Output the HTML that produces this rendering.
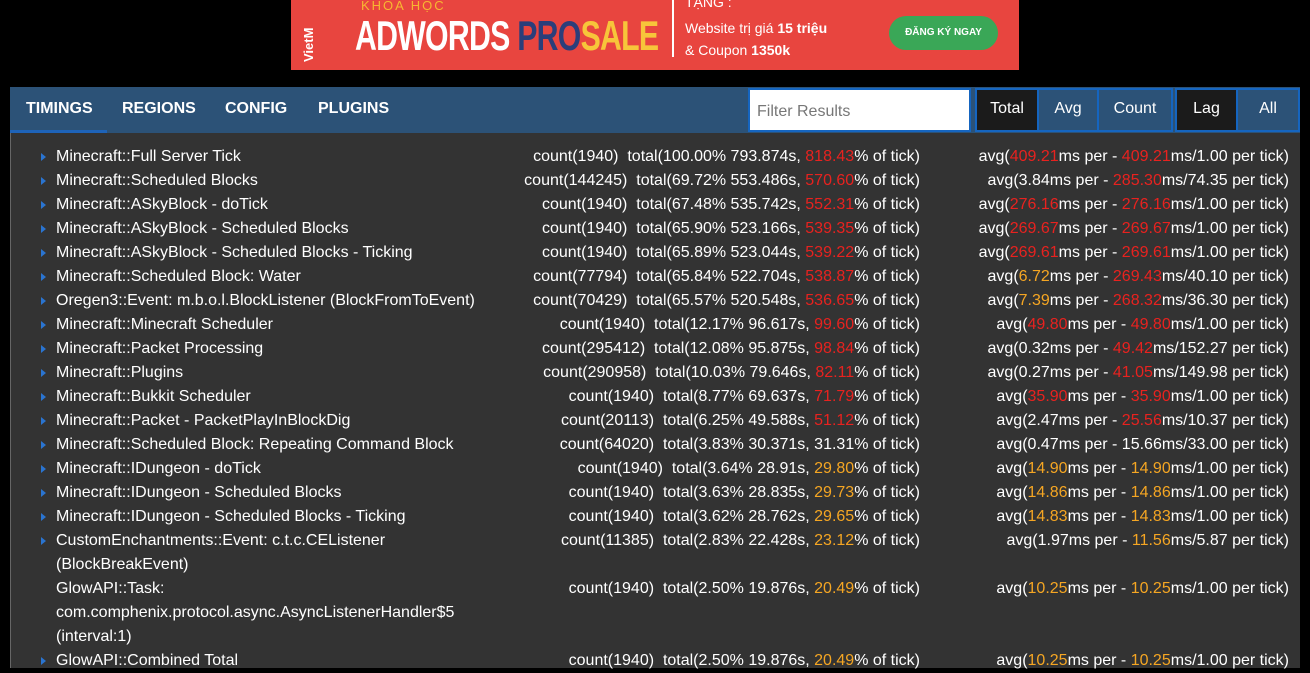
<!DOCTYPE html>
<html><head><meta charset="utf-8"><style>
*{margin:0;padding:0;box-sizing:border-box}
body{width:1310px;height:668px;background:#000;overflow:hidden;font-family:"Liberation Sans",Arial,sans-serif;position:relative}
.banner{position:absolute;left:291px;top:0;width:728px;height:70px;background:#e8453f;overflow:hidden;color:#fff}
.nav{position:absolute;left:10px;top:87px;width:1290px;height:46px;background:#2c5277}
.tab{position:absolute;top:13px;font-weight:bold;font-size:16px;color:#fff}
.uline{position:absolute;left:0;top:43px;width:97px;height:3px;background:#1e63b8}
.filter{position:absolute;left:738px;top:1px;width:223px;height:44px;background:#fff;border:2px solid #1565c0;color:#777;font-size:16px;padding:13px 7px}
.btns{position:absolute;top:1px;height:44px;border:2px solid #1565c0;display:flex;background:#2c5277}
.btns div{color:#fff;font-size:16px;text-align:center;line-height:38px;border-right:2px solid #1565c0}
.btns div:last-child{border-right:none}
.btns .on{background:#1b1b1b}
.panel{position:absolute;left:10px;top:133px;width:1290px;height:535px;background:#333;border-left:1px solid #666}
.row{position:absolute;left:0;width:1290px;color:#fff;font-size:16px;line-height:24px}
.tri{position:absolute;left:30px;top:8px;width:0;height:0;border-left:5px solid #2a74d0;border-top:4.5px solid transparent;border-bottom:4.5px solid transparent}
.nm{position:absolute;left:45px;top:0;width:440px}
.ct{position:absolute;right:381px;top:0;white-space:pre}
.av{position:absolute;right:12px;top:0;white-space:pre}
.r{color:#e8221f}.o{color:#f5a623}
</style></head><body>
<div class="banner">
<div style="position:absolute;left:10px;top:6px;font-size:13px;font-weight:bold;transform:rotate(-90deg);transform-origin:0 0;top:62px">VietM</div>
<div style="position:absolute;left:70px;top:-2px;font-size:13px;color:#f7b731;letter-spacing:2px">KHOA HỌC</div>
<div style="position:absolute;left:64px;top:12px;font-size:42px;font-weight:bold;transform:scaleX(.72);transform-origin:0 0;letter-spacing:-1px">ADWORDS <span style="color:#2b3e7a">PRO</span><span style="color:#f7c53a">SALE</span></div>
<div style="position:absolute;left:381px;top:0;width:2px;height:57px;background:#fff"></div>
<div style="position:absolute;left:394px;top:-6px;font-size:14px">TẶNG :</div>
<div style="position:absolute;left:394px;top:20px;font-size:14px">Website trị giá <b>15 triệu</b></div>
<div style="position:absolute;left:394px;top:42px;font-size:14px">&amp; Coupon <b>1350k</b></div>
<div style="position:absolute;left:598px;top:16px;width:109px;height:34px;border-radius:17px;background:#3aa757;font-size:10px;font-weight:bold;text-align:center;line-height:34px">ĐĂNG KÝ NGAY</div>
</div>
<div class="nav">
<div class="tab" style="left:16px">TIMINGS</div>
<div class="tab" style="left:112px">REGIONS</div>
<div class="tab" style="left:215px">CONFIG</div>
<div class="tab" style="left:308px">PLUGINS</div>
<div class="uline"></div>
<div class="filter">Filter Results</div>
<div class="btns" style="left:965px;width:198px"><div class="on" style="width:62px">Total</div><div style="width:60px">Avg</div><div style="width:72px">Count</div></div>
<div class="btns" style="left:1165px;width:125px"><div class="on" style="width:61px">Lag</div><div style="width:60px">All</div></div>
</div>
<div class="panel">
<div class="row" style="top:12px"><i class="tri"></i><div class="nm">Minecraft::Full Server Tick</div><div class="ct">count(1940)  total(100.00% 793.874s, <span class="r">818.43</span>% of tick)</div><div class="av">avg(<span class="r">409.21</span>ms per - <span class="r">409.21</span>ms/1.00 per tick)</div></div>
<div class="row" style="top:36px"><i class="tri"></i><div class="nm">Minecraft::Scheduled Blocks</div><div class="ct">count(144245)  total(69.72% 553.486s, <span class="r">570.60</span>% of tick)</div><div class="av">avg(3.84ms per - <span class="r">285.30</span>ms/74.35 per tick)</div></div>
<div class="row" style="top:60px"><i class="tri"></i><div class="nm">Minecraft::ASkyBlock - doTick</div><div class="ct">count(1940)  total(67.48% 535.742s, <span class="r">552.31</span>% of tick)</div><div class="av">avg(<span class="r">276.16</span>ms per - <span class="r">276.16</span>ms/1.00 per tick)</div></div>
<div class="row" style="top:84px"><i class="tri"></i><div class="nm">Minecraft::ASkyBlock - Scheduled Blocks</div><div class="ct">count(1940)  total(65.90% 523.166s, <span class="r">539.35</span>% of tick)</div><div class="av">avg(<span class="r">269.67</span>ms per - <span class="r">269.67</span>ms/1.00 per tick)</div></div>
<div class="row" style="top:108px"><i class="tri"></i><div class="nm">Minecraft::ASkyBlock - Scheduled Blocks - Ticking</div><div class="ct">count(1940)  total(65.89% 523.044s, <span class="r">539.22</span>% of tick)</div><div class="av">avg(<span class="r">269.61</span>ms per - <span class="r">269.61</span>ms/1.00 per tick)</div></div>
<div class="row" style="top:132px"><i class="tri"></i><div class="nm">Minecraft::Scheduled Block: Water</div><div class="ct">count(77794)  total(65.84% 522.704s, <span class="r">538.87</span>% of tick)</div><div class="av">avg(<span class="o">6.72</span>ms per - <span class="r">269.43</span>ms/40.10 per tick)</div></div>
<div class="row" style="top:156px"><i class="tri"></i><div class="nm">Oregen3::Event: m.b.o.l.BlockListener (BlockFromToEvent)</div><div class="ct">count(70429)  total(65.57% 520.548s, <span class="r">536.65</span>% of tick)</div><div class="av">avg(<span class="o">7.39</span>ms per - <span class="r">268.32</span>ms/36.30 per tick)</div></div>
<div class="row" style="top:180px"><i class="tri"></i><div class="nm">Minecraft::Minecraft Scheduler</div><div class="ct">count(1940)  total(12.17% 96.617s, <span class="r">99.60</span>% of tick)</div><div class="av">avg(<span class="r">49.80</span>ms per - <span class="r">49.80</span>ms/1.00 per tick)</div></div>
<div class="row" style="top:204px"><i class="tri"></i><div class="nm">Minecraft::Packet Processing</div><div class="ct">count(295412)  total(12.08% 95.875s, <span class="r">98.84</span>% of tick)</div><div class="av">avg(0.32ms per - <span class="r">49.42</span>ms/152.27 per tick)</div></div>
<div class="row" style="top:228px"><i class="tri"></i><div class="nm">Minecraft::Plugins</div><div class="ct">count(290958)  total(10.03% 79.646s, <span class="r">82.11</span>% of tick)</div><div class="av">avg(0.27ms per - <span class="r">41.05</span>ms/149.98 per tick)</div></div>
<div class="row" style="top:252px"><i class="tri"></i><div class="nm">Minecraft::Bukkit Scheduler</div><div class="ct">count(1940)  total(8.77% 69.637s, <span class="r">71.79</span>% of tick)</div><div class="av">avg(<span class="r">35.90</span>ms per - <span class="r">35.90</span>ms/1.00 per tick)</div></div>
<div class="row" style="top:276px"><i class="tri"></i><div class="nm">Minecraft::Packet - PacketPlayInBlockDig</div><div class="ct">count(20113)  total(6.25% 49.588s, <span class="r">51.12</span>% of tick)</div><div class="av">avg(2.47ms per - <span class="r">25.56</span>ms/10.37 per tick)</div></div>
<div class="row" style="top:300px"><i class="tri"></i><div class="nm">Minecraft::Scheduled Block: Repeating Command Block</div><div class="ct">count(64020)  total(3.83% 30.371s, 31.31% of tick)</div><div class="av">avg(0.47ms per - 15.66ms/33.00 per tick)</div></div>
<div class="row" style="top:324px"><i class="tri"></i><div class="nm">Minecraft::IDungeon - doTick</div><div class="ct">count(1940)  total(3.64% 28.91s, <span class="o">29.80</span>% of tick)</div><div class="av">avg(<span class="o">14.90</span>ms per - <span class="o">14.90</span>ms/1.00 per tick)</div></div>
<div class="row" style="top:348px"><i class="tri"></i><div class="nm">Minecraft::IDungeon - Scheduled Blocks</div><div class="ct">count(1940)  total(3.63% 28.835s, <span class="o">29.73</span>% of tick)</div><div class="av">avg(<span class="o">14.86</span>ms per - <span class="o">14.86</span>ms/1.00 per tick)</div></div>
<div class="row" style="top:372px"><i class="tri"></i><div class="nm">Minecraft::IDungeon - Scheduled Blocks - Ticking</div><div class="ct">count(1940)  total(3.62% 28.762s, <span class="o">29.65</span>% of tick)</div><div class="av">avg(<span class="o">14.83</span>ms per - <span class="o">14.83</span>ms/1.00 per tick)</div></div>
<div class="row" style="top:396px"><i class="tri"></i><div class="nm">CustomEnchantments::Event: c.t.c.CEListener<br>(BlockBreakEvent)</div><div class="ct">count(11385)  total(2.83% 22.428s, <span class="o">23.12</span>% of tick)</div><div class="av">avg(1.97ms per - <span class="o">11.56</span>ms/5.87 per tick)</div></div>
<div class="row" style="top:444px"><div class="nm">GlowAPI::Task:<br>com.comphenix.protocol.async.AsyncListenerHandler$5<br>(interval:1)</div><div class="ct">count(1940)  total(2.50% 19.876s, <span class="o">20.49</span>% of tick)</div><div class="av">avg(<span class="o">10.25</span>ms per - <span class="o">10.25</span>ms/1.00 per tick)</div></div>
<div class="row" style="top:516px"><i class="tri"></i><div class="nm">GlowAPI::Combined Total</div><div class="ct">count(1940)  total(2.50% 19.876s, <span class="o">20.49</span>% of tick)</div><div class="av">avg(<span class="o">10.25</span>ms per - <span class="o">10.25</span>ms/1.00 per tick)</div></div>
</div>
</body></html>
